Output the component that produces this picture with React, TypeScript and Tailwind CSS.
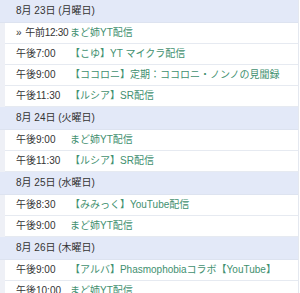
import React from "react";

type Row = { time: string; text: string; mark?: boolean };
type Day = { date: string; rows: Row[] };

const days: Day[] = [
  {
    date: "8月 23日 (月曜日)",
    rows: [
      { time: "午前12:30", text: "まど姉YT配信", mark: true },
      { time: "午後7:00", text: "【こゆ】YT マイクラ配信" },
      { time: "午後9:00", text: "【ココロニ】定期：ココロニ・ノンノの見聞録" },
      { time: "午後11:30", text: "【ルシア】SR配信" },
    ],
  },
  {
    date: "8月 24日 (火曜日)",
    rows: [
      { time: "午後9:00", text: "まど姉YT配信" },
      { time: "午後11:30", text: "【ルシア】SR配信" },
    ],
  },
  {
    date: "8月 25日 (水曜日)",
    rows: [
      { time: "午後8:30", text: "【みみっく】YouTube配信" },
      { time: "午後9:00", text: "まど姉YT配信" },
    ],
  },
  {
    date: "8月 26日 (木曜日)",
    rows: [
      { time: "午後9:00", text: "【アルバ】Phasmophobiaコラボ【YouTube】" },
      { time: "午後10:00", text: "まど姉YT配信" },
    ],
  },
];

export default function App() {
  return (
    <div
      className="w-[300px] h-[293px] overflow-hidden bg-white text-[10px] leading-none"
      style={{ fontFamily: '"Liberation Sans", "Noto Sans CJK JP", sans-serif' }}
    >
      <div className="w-[299px] border-r border-[#e4e8ef] bg-[#eef0f6]">
        {days.map((d) => (
          <div key={d.date}>
            <div className="h-[23px] bg-[#e3e9f8] border-b border-[#dde3f0] flex items-center pl-[16px] text-[#333]">
              {d.date}
            </div>
            {d.rows.map((r, i) => (
              <div
                key={i}
                className="ml-[5px] h-[21px] bg-white border-b border-[#e6eaf1] flex items-center pl-[11px] whitespace-nowrap"
              >
                <span className="w-[54px] shrink-0 text-[#333]">
                  {r.mark ? (
                    <span className="tracking-[-0.3px]">
                      <span className="mr-[4px]">»</span>
                      {r.time}
                    </span>
                  ) : (
                    r.time
                  )}
                </span>
                <span className="text-[#42906f]">{r.text}</span>
              </div>
            ))}
          </div>
        ))}
      </div>
    </div>
  );
}
